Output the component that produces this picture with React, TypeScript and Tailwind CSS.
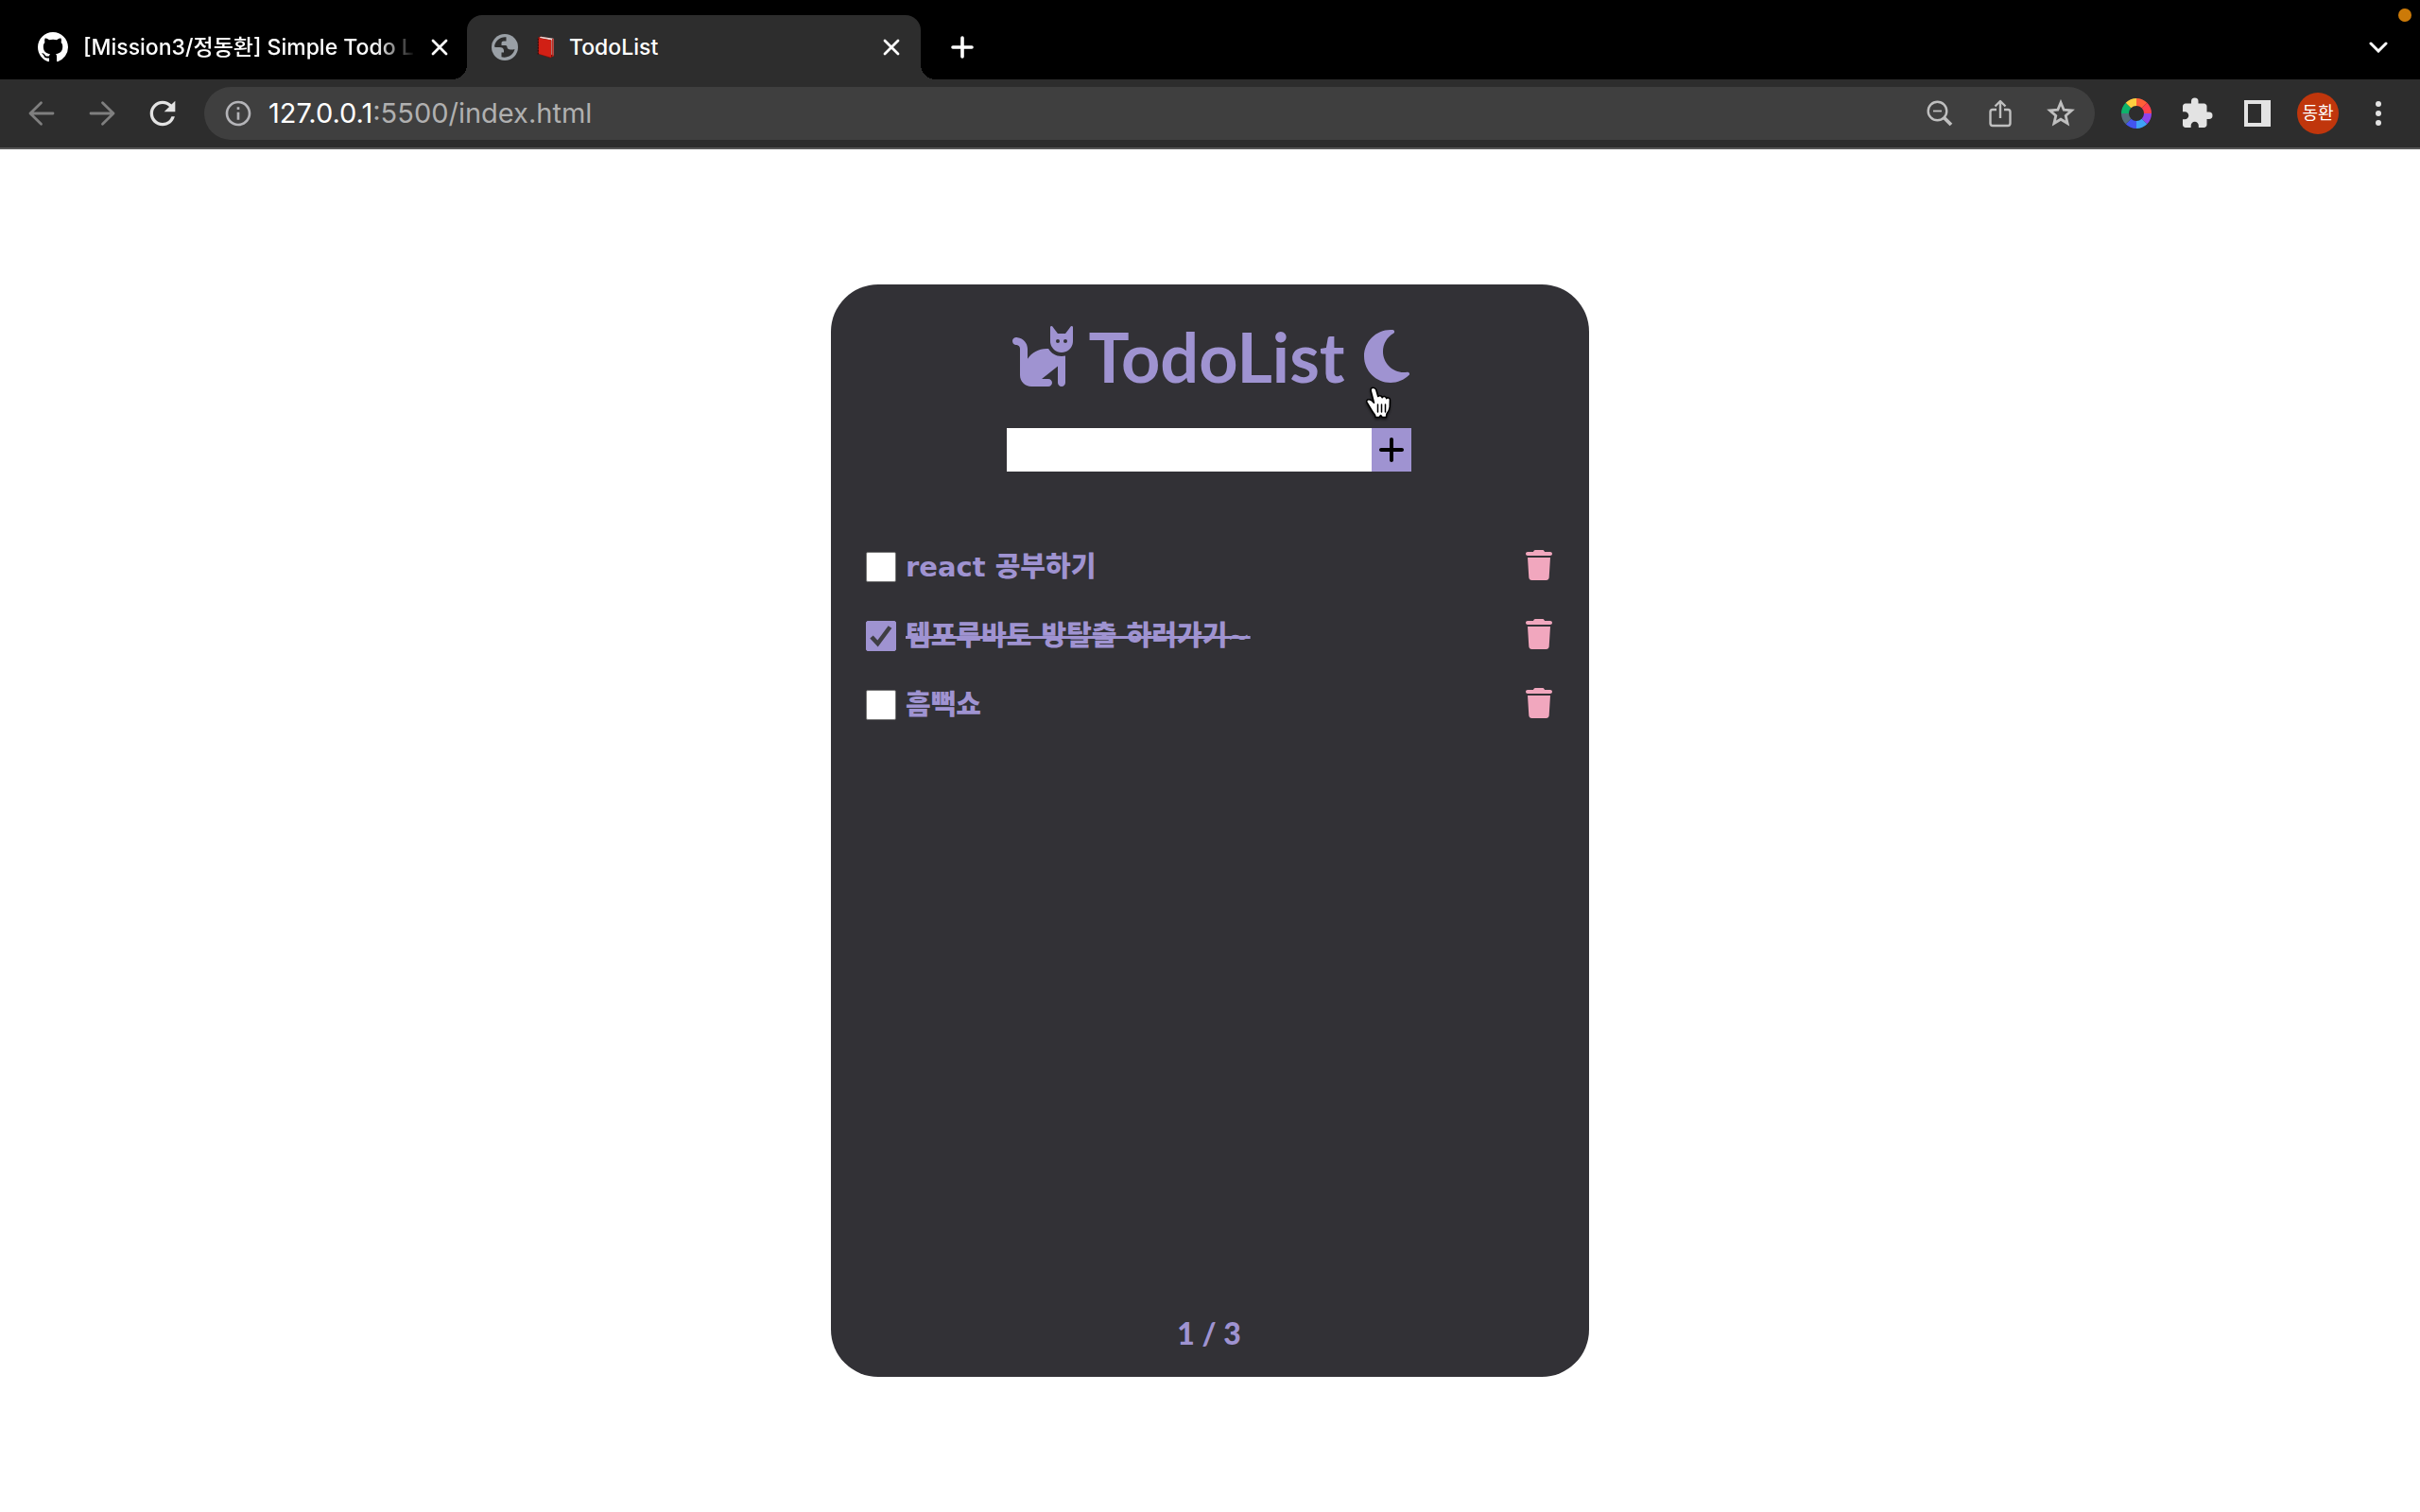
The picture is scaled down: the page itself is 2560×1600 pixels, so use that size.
import { useState } from "react";
import type { ReactNode } from "react";
import { FaCat, FaMoon, FaPlus, FaTrash } from "react-icons/fa6";
import { MdExtension, MdInfoOutline, MdRefresh } from "react-icons/md";

type Todo = { id: number; text: string; done: boolean };

const initialTodos: Todo[] = [
  { id: 1, text: "react 공부하기", done: false },
  { id: 2, text: "템포루바토 방탈출 하러가기~", done: true },
  { id: 3, text: "흠뻑쇼", done: false },
];

const ringColors = ["#ff5f38", "#ff414d", "#8e44ec", "#3fa2f7", "#4355f0", "#546e7a", "#0db46a", "#ffcf3f"];

function GithubMark() {
  return (
    <svg viewBox="0 0 16 16" className="size-8 shrink-0 fill-white">
      <path d="M8 0C3.58 0 0 3.58 0 8c0 3.54 2.29 6.53 5.47 7.59.4.07.55-.17.55-.38 0-.19-.01-.82-.01-1.49-2.01.37-2.53-.49-2.69-.94-.09-.23-.48-.94-.82-1.13-.28-.15-.68-.52-.01-.53.63-.01 1.08.58 1.23.82.72 1.21 1.87.87 2.33.66.07-.52.28-.87.51-1.07-1.78-.2-3.64-.89-3.64-3.95 0-.87.31-1.59.82-2.15-.08-.2-.36-1.02.08-2.12 0 0 .67-.21 2.2.82.64-.18 1.32-.27 2-.27s1.36.09 2 .27c1.53-1.04 2.2-.82 2.2-.82.44 1.1.16 1.92.08 2.12.51.56.82 1.27.82 2.15 0 3.07-1.87 3.75-3.65 3.95.29.25.54.73.54 1.48 0 1.07-.01 1.93-.01 2.2 0 .21.15.46.55.38A8.01 8.01 0 0 0 16 8c0-4.42-3.58-8-8-8z" />
    </svg>
  );
}

function Globe() {
  return (
    <svg viewBox="0 0 28 28" className="size-7 shrink-0">
      <circle cx="14" cy="14" r="14" fill="#9aa0a6" />
      <path
        d="M15.500 3.200C9 2.600 3.500 7.500 3 13.500c1.500.8 3.500.5 5.500.5 2.500 0 4.500 1 4.500 3.500v2h-2.500v4.800c5.500 1.700 12.500-1.800 14-8.300-1.500.6-3 .5-4.500.5-2 0-3.500-1-3.500-2.500s-1-2-2.500-2h-3.500V9.500c0-1.200 1-2 2.200-2h2.800z"
        fill="#2d2d2d"
      />
    </svg>
  );
}

function Book() {
  return (
    <svg viewBox="0 0 18 24" className="h-6 w-[18px] shrink-0">
      <path d="M1 1.500 4 .5 17.500 3v18.500L14 23.500 1 19z" fill="#7d120d" />
      <path d="M4 .8 17.500 2.800v18l-2-1V4.500L2.500 2z" fill="#e9d6d3" />
      <path d="M2 2.300 15 4.500v18.300L2 19z" fill="#d12015" />
      <path d="M16.800 3v19" stroke="#b51c12" strokeWidth="1.400" />
      <path d="M1.200 3v16.500" stroke="#3a0b0a" strokeWidth="1.200" strokeDasharray="1.500 1.500" />
    </svg>
  );
}

function CloseIcon() {
  return (
    <svg viewBox="0 0 18 18" className="size-[18px]" fill="none" stroke="#fff" strokeWidth="2.800" strokeLinecap="round">
      <path d="M2 2l14 14M16 2 2 16" />
    </svg>
  );
}

function ArrowIcon({ flip }: { flip?: boolean }) {
  return (
    <svg
      viewBox="0 0 28 28"
      className="size-7"
      fill="none"
      stroke="#7f7f7f"
      strokeWidth="2.800"
      strokeLinecap="round"
      strokeLinejoin="round"
    >
      <path d={flip ? "M2 14h24M14.500 2.800 26 14 14.500 25.200" : "M26 14H2M13.500 2.800 2 14l11.500 11.200"} />
    </svg>
  );
}

function ColorRing() {
  const point = (r: number, deg: number) => {
    const a = ((deg - 90) * Math.PI) / 180;
    return `${16 + r * Math.cos(a)} ${16 + r * Math.sin(a)}`;
  };
  return (
    <svg viewBox="0 0 32 32" className="size-8">
      {ringColors.map((color, i) => (
        <path
          key={color}
          fill={color}
          d={`M${point(8, i * 45)}L${point(16, i * 45)}A16 16 0 0 1 ${point(16, i * 45 + 45)}L${point(8, i * 45 + 45)}A8 8 0 0 0 ${point(8, i * 45)}Z`}
        />
      ))}
    </svg>
  );
}

function HandCursor() {
  return (
    <svg viewBox="0 0 32 34" className="pointer-events-none absolute top-full left-0 h-[34px] w-8 drop-shadow-[0_2px_1px_rgba(0,0,0,0.5)]">
      <path
        d="M9.500 1.200c-2 0-2.800 1.600-2.300 3.500l3.300 12.500c-1.800-2.200-3.600-3.700-5.600-3.500-2.200.2-2.800 2-1.700 3.500l5.300 8.800c1 1.700 2.300 3.100 3 4.300l.6 2.200h4l1.500-2 1.600 2h4.200l.6-3.500c1.600-2.300 3-4.200 3.200-7.500l.2-7.500c0-2.300-2.900-2.800-3.700-1.300-.5-2.500-3.700-2.900-4.500-1-.7-2.200-3.500-2.500-4.400-1.200L12.700 3.300c-.5-1.300-1.500-2.100-3.200-2.100z"
        fill="#fff"
        stroke="#000"
        strokeWidth="1.600"
        strokeLinejoin="round"
      />
      <path d="M14.500 19v8M18.500 19v8M22.500 19v8" stroke="#000" strokeWidth="1.500" strokeLinecap="round" />
    </svg>
  );
}

function BarButton({ label, children }: { label: string; children: ReactNode }) {
  return (
    <button type="button" aria-label={label} className="flex h-14 w-16 shrink-0 items-center justify-center">
      {children}
    </button>
  );
}

function TabStrip() {
  return (
    <div className="relative flex h-[84px] bg-black pt-4 text-[23px] font-medium text-white">
      <div className="flex h-[68px] w-[494px] items-center pr-5 pl-10">
        <GithubMark />
        <span className="ml-4 min-w-0 flex-1 overflow-hidden whitespace-nowrap [mask-image:linear-gradient(to_right,#000_88%,transparent)]">
          [Mission3/정동환] Simple Todo L
        </span>
        <button type="button" aria-label="Close tab" className="ml-4">
          <CloseIcon />
        </button>
      </div>

      <div className="relative flex h-[68px] w-[480px] items-center rounded-t-2xl bg-[#2d2d2d] pr-[22px] pl-[26px]">
        <span className="absolute right-full bottom-0 size-4 bg-[radial-gradient(circle_at_0_0,#000_16px,#2d2d2d_16px)]" />
        <span className="absolute bottom-0 left-full size-4 bg-[radial-gradient(circle_at_100%_0,#000_16px,#2d2d2d_16px)]" />
        <Globe />
        <span className="ml-5 flex min-w-0 flex-1 items-center gap-4">
          <Book />
          TodoList
        </span>
        <button type="button" aria-label="Close tab">
          <CloseIcon />
        </button>
      </div>

      <div className="flex h-[68px] flex-1 items-center justify-between px-3">
        <BarButton label="New tab">
          <svg viewBox="0 0 24 24" className="size-6" stroke="#fff" strokeWidth="3.600" strokeLinecap="round">
            <path d="M12 2v20M2 12h20" />
          </svg>
        </BarButton>
        <BarButton label="Search tabs">
          <svg viewBox="0 0 20 12" className="h-3 w-5" fill="none" stroke="#fff" strokeWidth="3" strokeLinecap="round">
            <path d="M2 2l8 8 8-8" />
          </svg>
        </BarButton>
      </div>
      <span className="absolute top-[9px] right-[9px] size-[14px] rounded-full bg-[#cc7a08]" />
    </div>
  );
}

function Toolbar() {
  return (
    <div className="flex h-[74px] items-center gap-3 border-b-2 border-[#575757] bg-[#2d2d2d] px-3">
      <div className="flex">
        <BarButton label="Back">
          <ArrowIcon />
        </BarButton>
        <BarButton label="Forward">
          <ArrowIcon flip />
        </BarButton>
        <BarButton label="Reload">
          <MdRefresh className="size-10 text-[#e3e3e3]" />
        </BarButton>
      </div>

      <div className="flex h-14 min-w-0 flex-1 items-center rounded-full bg-[#3f3f3f] px-1">
        <BarButton label="Site information">
          <MdInfoOutline className="size-8 text-[#b4b4b8]" />
        </BarButton>
        <div
          role="textbox"
          aria-label="Address"
          contentEditable
          suppressContentEditableWarning
          className="min-w-0 flex-1 text-[29px] leading-9 whitespace-nowrap text-[#b0b0b0]"
        >
          <span className="text-white">127.0.0.1</span>:5500/index.html
        </div>
        <BarButton label="Zoom">
          <svg viewBox="0 0 28 28" className="size-7" fill="none" stroke="#bfbfbf" strokeWidth="2.400">
            <circle cx="11.500" cy="11.500" r="9.800" />
            <path d="M7 11.500h9" strokeWidth="1.800" />
            <path d="M18.500 18.500l7.500 7.500" strokeWidth="3.800" />
          </svg>
        </BarButton>
        <BarButton label="Share">
          <svg viewBox="0 0 24 30" className="h-[30px] w-6" fill="none" stroke="#bfbfbf" strokeWidth="2.400" strokeLinejoin="round">
            <path d="M8 11H4a2.500 2.500 0 0 0-2.500 2.500v12A2.500 2.500 0 0 0 4 28h16a2.500 2.500 0 0 0 2.500-2.500v-12A2.500 2.500 0 0 0 20 11h-4" />
            <path d="M12 20V2M6.500 7.500 12 2l5.500 5.500" />
          </svg>
        </BarButton>
        <BarButton label="Bookmark">
          <svg viewBox="0 0 30 30" className="size-[30px]" fill="none" stroke="#bfbfbf" strokeWidth="2.800">
            <path d="M15 3.500l3.200 7.700 8.300.7-6.300 5.500 1.900 8.100L15 21.200l-7.100 4.300 1.900-8.100-6.300-5.500 8.300-.7z" />
          </svg>
        </BarButton>
      </div>

      <div className="flex">
        <BarButton label="Color picker">
          <ColorRing />
        </BarButton>
        <BarButton label="Extensions">
          <MdExtension className="size-9 text-[#e3e3e3]" />
        </BarButton>
        <BarButton label="Side panel">
          <span className="h-7 w-7 border-4 border-r-[10px] border-[#e3e3e3]" />
        </BarButton>
        <BarButton label="Profile">
          <span className="flex size-11 items-center justify-center rounded-full bg-[#c0360c] text-lg text-white">동환</span>
        </BarButton>
        <BarButton label="Menu">
          <svg viewBox="0 0 6 28" className="h-7 w-[6px] fill-[#e3e3e3]">
            <circle cx="3" cy="4" r="3" />
            <circle cx="3" cy="14" r="3" />
            <circle cx="3" cy="24" r="3" />
          </svg>
        </BarButton>
      </div>
    </div>
  );
}

function TodoItem({ todo, onToggle, onRemove }: { todo: Todo; onToggle: () => void; onRemove: () => void }) {
  return (
    <li className="flex h-[73px] items-center justify-between">
      <label className="flex items-center gap-[10px]">
        <span className="grid size-8 place-items-center">
          <input
            type="checkbox"
            checked={todo.done}
            onChange={onToggle}
            className="col-start-1 row-start-1 size-8 appearance-none rounded-xs border border-[#767676] bg-white checked:border-[#9f93d1] checked:bg-[#9f93d1]"
          />
          {todo.done && (
            <svg viewBox="0 0 32 32" className="pointer-events-none col-start-1 row-start-1 size-8" fill="none" stroke="#3f3e44" strokeWidth="4.600">
              <path d="M6 17l6.500 7L25.500 6.500" />
            </svg>
          )}
        </span>
        <span className={todo.done ? "line-through decoration-3" : ""}>{todo.text}</span>
      </label>
      <button type="button" aria-label={`Delete ${todo.text}`} onClick={onRemove} className="pb-1">
        <FaTrash className="h-8 w-7 text-[#f1a7be]" />
      </button>
    </li>
  );
}

export default function App() {
  const [todos, setTodos] = useState(initialTodos);
  const [text, setText] = useState("");

  const addTodo = () => {
    if (!text.trim()) return;
    setTodos([...todos, { id: Date.now(), text, done: false }]);
    setText("");
  };

  return (
    <div className="flex min-h-screen flex-col bg-white font-['Inter','Noto_Sans_CJK_KR',sans-serif]">
      <header>
        <TabStrip />
        <Toolbar />
      </header>

      <main className="flex flex-1 items-center justify-center">
        <section className="flex min-h-[1156px] w-full max-w-[802px] flex-col rounded-[50px] bg-[#323136] pt-11 pr-[39px] pb-[26px] pl-[37px] text-[#9f93d1]">
          <div className="flex h-16 items-center justify-center">
            <FaCat className="h-16 w-[72px]" />
            <h1 className="mr-5 ml-3 font-['Lato',sans-serif] text-[72px] leading-none font-bold">TodoList</h1>
            <button type="button" aria-label="Toggle dark mode" className="relative">
              <FaMoon className="h-16 w-12" />
              <HandCursor />
            </button>
          </div>

          <form
            className="mt-11 flex h-[46px] justify-center"
            onSubmit={(e) => {
              e.preventDefault();
              addTodo();
            }}
          >
            <input
              type="text"
              aria-label="New todo"
              value={text}
              onChange={(e) => setText(e.target.value)}
              className="w-[386px] bg-white px-3 text-2xl text-black outline-none"
            />
            <button type="submit" aria-label="Add todo" className="flex w-[42px] items-center justify-center bg-[#9f93d1] text-black">
              <FaPlus className="h-8 w-7" />
            </button>
          </form>

          <ul className="mt-16 flex-1 font-['DejaVu_Sans','Noto_Sans_CJK_KR',sans-serif] text-[29px] leading-10 font-black">
            {todos.map((todo) => (
              <TodoItem
                key={todo.id}
                todo={todo}
                onToggle={() => setTodos(todos.map((t) => (t.id === todo.id ? { ...t, done: !t.done } : t)))}
                onRemove={() => setTodos(todos.filter((t) => t.id !== todo.id))}
              />
            ))}
          </ul>

          <p className="text-center font-['Lato',sans-serif] text-[32px] leading-10 font-black">
            {todos.filter((t) => t.done).length} / {todos.length}
          </p>
        </section>
      </main>
    </div>
  );
}
